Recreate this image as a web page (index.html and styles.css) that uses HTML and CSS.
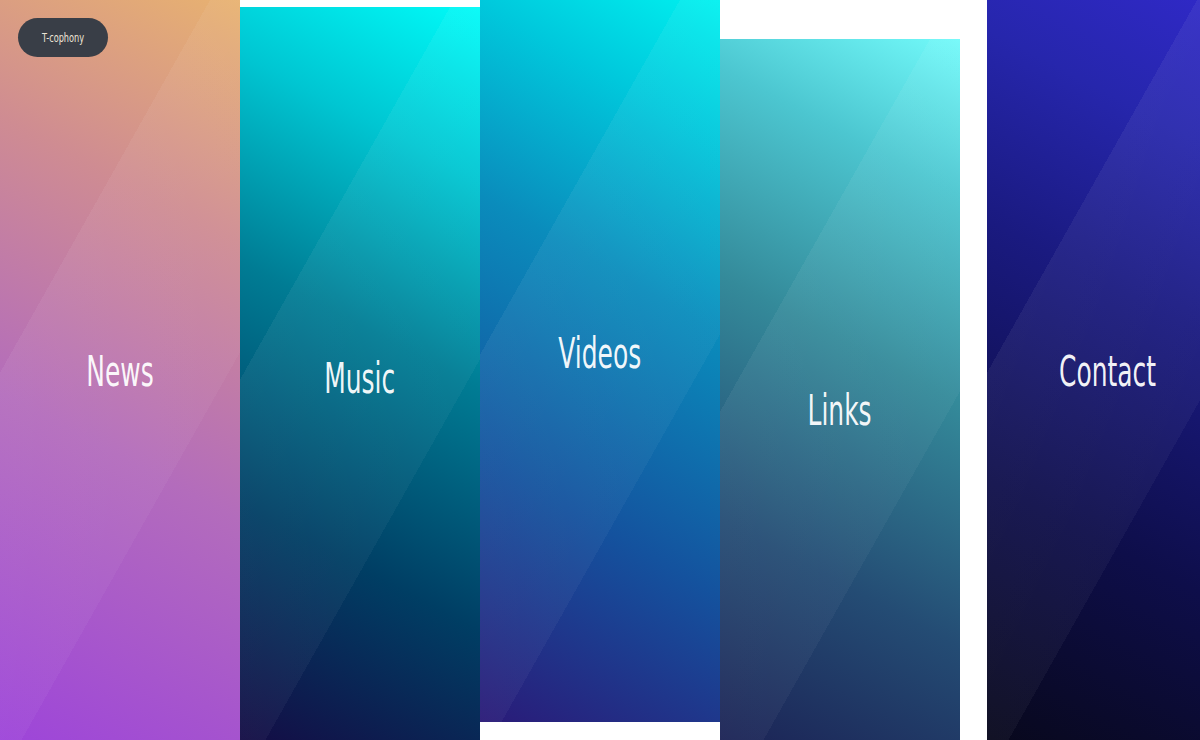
FILE: index.html
```html
<!DOCTYPE html>
<html lang="en">
<head>
<meta charset="utf-8">
<title>T-cophony</title>
<link rel="stylesheet" href="styles.css">
</head>
<body>
<div class="stage">
  <a class="logo" href="#"><span class="logo-text">T-cophony</span></a>
  <nav class="panels">
    <a class="panel p1" href="#"><span class="label">News</span></a>
    <a class="panel p2" href="#"><span class="label">Music</span></a>
    <a class="panel p3" href="#"><span class="label">Videos</span></a>
    <a class="panel p4" href="#"><span class="label">Links</span></a>
    <a class="panel p5" href="#"><span class="label">Contact</span></a>
  </nav>
</div>
</body>
</html>
```

FILE: styles.css
```css
html, body {
  margin: 0;
  padding: 0;
  background: #ffffff;
  overflow: hidden;
}
.stage {
  position: relative;
  width: 1200px;
  height: 740px;
  overflow: hidden;
  font-family: "DejaVu Sans Condensed", "DejaVu Sans", sans-serif;
}
.logo {
  position: absolute;
  z-index: 5;
  left: 18px;
  top: 18px;
  width: 90px;
  height: 39px;
  border-radius: 20px;
  background: #393e47;
  color: #ece4d6;
  display: flex;
  align-items: center;
  justify-content: center;
  text-decoration: none;
}
.logo-text {
  display: block;
  font-size: 13px;
  transform: scaleX(0.7);
  white-space: nowrap;
}
.panels {
  display: flex;
  height: 740px;
}
.panel {
  flex: 0 0 240px;
  height: 740px;
  display: flex;
  align-items: center;
  justify-content: center;
  text-decoration: none;
  color: rgba(255, 255, 255, 0.95);
  --band: linear-gradient(119.4deg, transparent 183px, rgba(255, 255, 255, 0.055) 183px, rgba(255, 255, 255, 0.04) 382px, transparent 382px);
}
.label {
  display: block;
  font-size: 42px;
  font-weight: 400;
  white-space: nowrap;
  transform: translateY(1px) scaleX(0.66);
}
.p1 {
  background: var(--band), linear-gradient(28deg, #9d45d9 0%, #b36cbc 40%, #cf8c92 72%, #e8b270 100%);
}
.p2 {
  transform: translateY(7px);
  background: var(--band), linear-gradient(28deg, #140b44 0%, #003e64 28%, #007c94 56%, #00c6d2 80%, #00fbf8 100%);
}
.p3 {
  transform: translateY(-18px);
  background: var(--band), linear-gradient(30deg, #2a1a78 0%, #14529e 30%, #0a8cbc 60%, #00c8dc 82%, #00f6f2 100%);
}
.p4 {
  transform: translateY(39px);
  background: var(--band), linear-gradient(28deg, #1a1c50 0%, #244c74 30%, #348a9a 58%, #4cc6d0 82%, #72fafa 100%);
}
.p5 {
  transform: translateX(27px);
  background: var(--band), linear-gradient(28deg, #08081c 0%, #0e0e4a 30%, #1a1a80 60%, #2626ac 82%, #3029c8 100%);
}
```
